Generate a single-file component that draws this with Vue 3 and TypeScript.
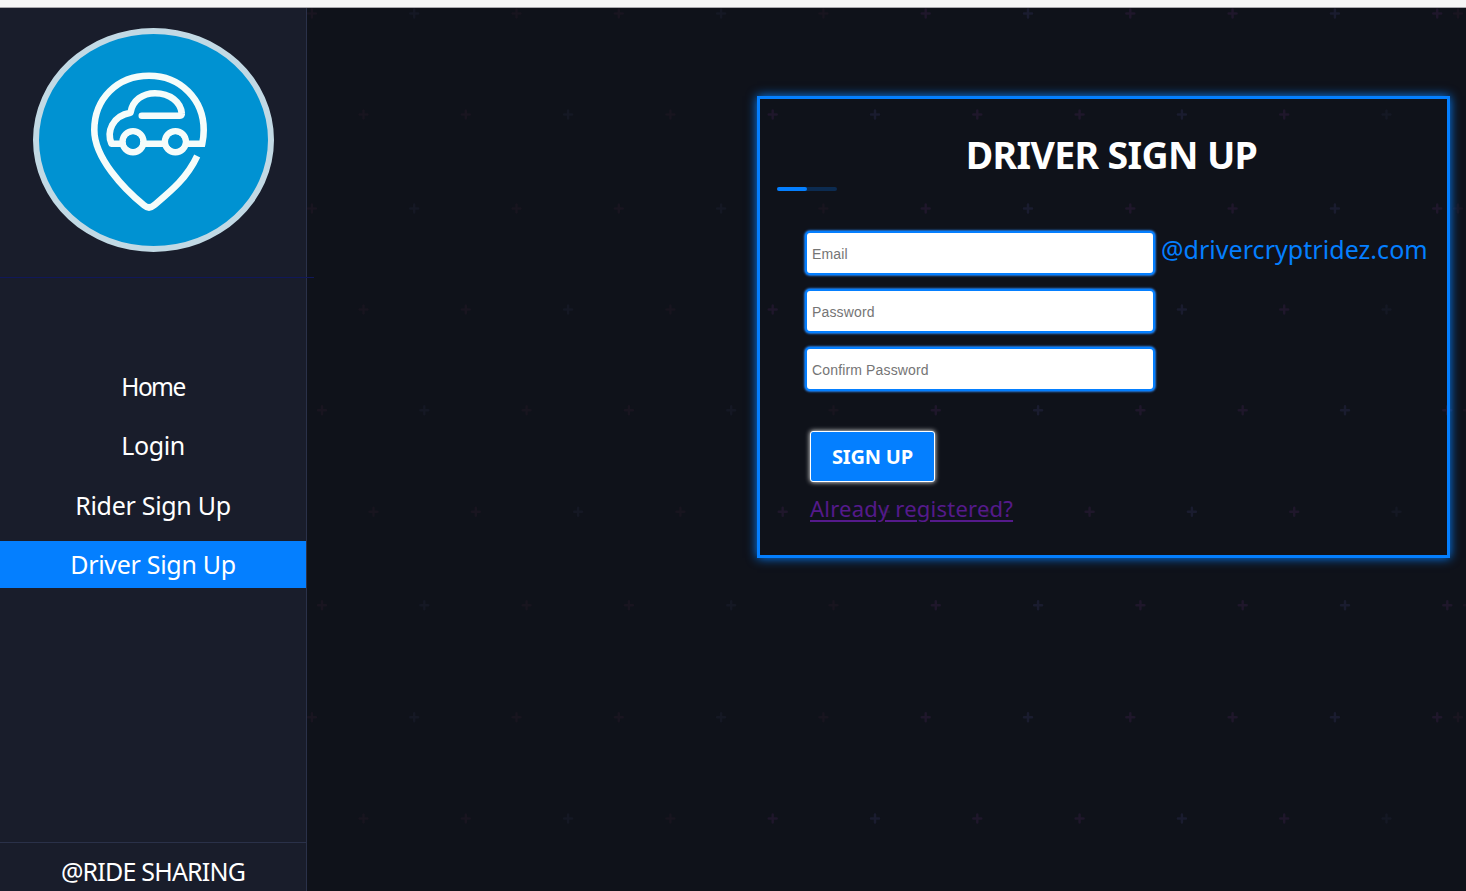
<script setup lang="ts">
import { ref } from 'vue'

interface NavItem { label: string; id: string; active?: boolean }
interface Field { id: string; label: string; type: string; suffix?: string }
interface Plus { x: number; y: number; color: string }

const nav: NavItem[] = [
  { label: 'Home', id: 'home' },
  { label: 'Login', id: 'login' },
  { label: 'Rider Sign Up', id: 'rider' },
  { label: 'Driver Sign Up', id: 'driver', active: true },
]

const fields: Field[] = [
  { id: 'email', label: 'Email', type: 'text', suffix: '@drivercryptridez.com' },
  { id: 'password', label: 'Password', type: 'password' },
  { id: 'confirm', label: 'Confirm Password', type: 'password' },
]
const values = ref<Record<string, string>>({ email: '', password: '', confirm: '' })

// Each row holds a run of six strong marks, with faint ones on either side.
const rows: { y: number; start: number; extra?: number }[] = [
  { y: 13.5, start: 925.7, extra: 1458 },
  { y: 114.5, start: 772.7 },
  { y: 208.5, start: 925.7, extra: 1458 },
  { y: 309.5, start: 772.7 },
  { y: 410.3, start: 935.8, extra: 1468 },
  { y: 511.7, start: 782.7 },
  { y: 605.3, start: 935.8, extra: 1468 },
  { y: 717.3, start: 925.7, extra: 1458 },
  { y: 818.5, start: 772.7 },
]
const strong = ['#1f172b', '#1a1c2f', '#1f172b']
const faint = ['#191520', '#151824', '#18151f']
const pluses: Plus[] = []
for (const row of rows) {
  for (let i = -6; i <= 6; i++) {
    const x = row.start + i * 102.3
    if (x < 308 || x > 1466 || (row.extra && i > 5)) continue
    const tone = (i + 6) % 3
    pluses.push({ x, y: row.y, color: i === 6 ? faint[1] : i < 0 ? faint[tone] : strong[tone] })
  }
  if (row.extra) pluses.push({ x: row.extra, y: row.y, color: faint[0] })
}
</script>

<template>
  <div class="page">
    <div class="topbar"></div>
    <svg class="pattern" width="1466" height="891" viewBox="0 0 1466 891" fill="none" aria-hidden="true">
      <path
        v-for="(p, i) in pluses"
        :key="i"
        :d="`M${p.x - 4} ${p.y}h8M${p.x} ${p.y - 4}v8`"
        :stroke="p.color"
        stroke-width="2.5"
        stroke-linecap="round"
      />
    </svg>
    <div class="layout">
      <aside class="sidebar">
        <div class="brand">
          <div class="logo">
            <svg width="229" height="212" viewBox="39 34 229 212" fill="none" stroke="#f5fcfa" stroke-width="6.6" stroke-linejoin="round">
              <path d="M197.2 156C187 178 171 191 154 205.3Q149 209.6 144 205.3C124 189 94.3 158 94.3 130C94.3 99 117 75.8 149 75.8C181 75.8 203.7 100 203.7 130Q203.7 137 202.2 143.8H188" stroke-linejoin="miter" />
              <path d="M120 143.8H111.5C106.5 132 112 116 130.5 112.8C132.5 100 143 93.2 155 93.2C170 93.2 181 102 181.8 113.6Q182 115.7 180 115.7H141.8" stroke-linecap="round" />
              <circle cx="133" cy="141.7" r="10.4" />
              <circle cx="175.4" cy="141.7" r="10.4" />
              <path d="M143 143.8h22M183 143.8h6" />
              <circle cx="133" cy="141.7" r="7.2" fill="#0092d2" stroke="none" />
              <circle cx="175.4" cy="141.7" r="7.2" fill="#0092d2" stroke="none" />
            </svg>
          </div>
        </div>
        <nav class="menu">
          <a v-for="n in nav" :key="n.id" class="item" :class="{ active: n.active }"><span :class="n.id">{{ n.label }}</span></a>
        </nav>
        <footer class="copyright"><span>@RIDE SHARING</span></footer>
      </aside>
      <main class="content">
        <section class="card">
          <h1 class="title">DRIVER SIGN UP</h1>
          <div class="rule"></div>
          <form class="form" @submit.prevent>
            <div v-for="f in fields" :key="f.id" class="row">
              <input v-model="values[f.id]" :type="f.type" :placeholder="f.label" />
              <span v-if="f.suffix" class="suffix">{{ f.suffix }}</span>
            </div>
            <button type="submit">SIGN UP</button>
            <a class="registered" href="#">Already registered?</a>
          </form>
        </section>
      </main>
    </div>
  </div>
</template>

<style>
body {
  margin: 0;
  background: #0f121a;
  overflow: hidden;
}
</style>

<style scoped>
* {
  box-sizing: border-box;
}
.page {
  position: relative;
  width: 1466px;
  height: 891px;
  overflow: hidden;
  display: flex;
  flex-direction: column;
  background: #0f121a;
  color: #fff;
  font-family: 'Noto Sans', 'Open Sans', sans-serif;
}
.topbar {
  flex: none;
  height: 8px;
  background: #f6f6f6;
  border-bottom: 1px solid #a9a8ad;
  position: relative;
  z-index: 1;
}
.pattern {
  position: absolute;
  inset: 0;
}
.layout {
  position: relative;
  flex: 1;
  display: flex;
}
.sidebar {
  width: 307px;
  flex: none;
  display: flex;
  flex-direction: column;
  background: #191d2b;
  border-right: 1px solid #2a3149;
}
.brand {
  width: 314px;
  height: 270px;
  padding: 20px 0 0 33px;
  border-bottom: 1px solid #10185a;
}
.logo {
  width: 241px;
  height: 224px;
  border: 6px solid #c2d9e4;
  border-radius: 50%;
  background: #0092d2;
  overflow: hidden;
}
.logo svg {
  display: block;
}
.menu {
  flex: 1;
  padding-top: 85px;
  display: flex;
  flex-direction: column;
  gap: 12.4px;
}
.item {
  height: 47px;
  line-height: 47px;
  text-align: center;
  font-size: 25px;
  letter-spacing: -0.3px;
  white-space: nowrap;
}
.home {
  font-size: 24.5px;
  letter-spacing: -1.6px;
}
.login {
  letter-spacing: -0.4px;
}
.item.active {
  background: #047fff;
}
.copyright {
  height: 49px;
  border-top: 1px solid #2a3149;
  text-align: center;
  font-size: 25px;
  letter-spacing: -0.8px;
  line-height: 57px;
  white-space: nowrap;
}
.content {
  flex: 1;
  padding: 88px 0 0 450px;
}
.card {
  width: 693px;
  height: 462px;
  border: 3px solid #047fff;
  box-shadow: 0 0 10px #047fff;
  padding: 30px 17px 0;
}
.title {
  margin: 0;
  padding-left: 16px;
  height: 58px;
  line-height: 51px;
  text-align: center;
  font-size: 37.5px;
  letter-spacing: -0.65px;
  font-weight: 700;
  white-space: nowrap;
}
.rule {
  width: 60px;
  height: 4px;
  border-radius: 2px;
  background: #0c2b50;
}
.rule::before {
  content: '';
  display: block;
  width: 30px;
  height: 4px;
  border-radius: 2px;
  background: #047fff;
}
.form {
  padding: 40px 0 0 28px;
  display: flex;
  flex-direction: column;
  align-items: flex-start;
}
.row {
  display: flex;
  height: 44px;
  margin-bottom: 14px;
}
input {
  width: 350px;
  height: 44px;
  padding: 2px 5px 0;
  border: 2px solid #047fff;
  border-radius: 5px;
  box-shadow: 0 0 2px 1px #2479de;
  background: #fff;
  font: 14px 'Liberation Sans', sans-serif;
  letter-spacing: 0.15px;
  outline: none;
}
input::placeholder {
  color: #757575;
}
.suffix {
  margin-left: 6px;
  color: #047fff;
  font-size: 25px;
  letter-spacing: 0.05px;
  line-height: 37px;
  white-space: nowrap;
}
button {
  margin: 26px 0 0 5px;
  width: 125px;
  height: 51px;
  padding: 0 0 1px;
  border: 1px solid #fff;
  border-radius: 3px;
  background: #047fff;
  box-shadow: 0 0 5px #fff;
  color: #fff;
  font: 700 20px 'Noto Sans', sans-serif;
  letter-spacing: -0.15px;
}
.registered {
  margin: 7px 0 0 5px;
  color: #551a8b;
  font-size: 22px;
  letter-spacing: 0.22px;
  line-height: 38px;
  white-space: nowrap;
  text-underline-offset: 3px;
}
</style>
